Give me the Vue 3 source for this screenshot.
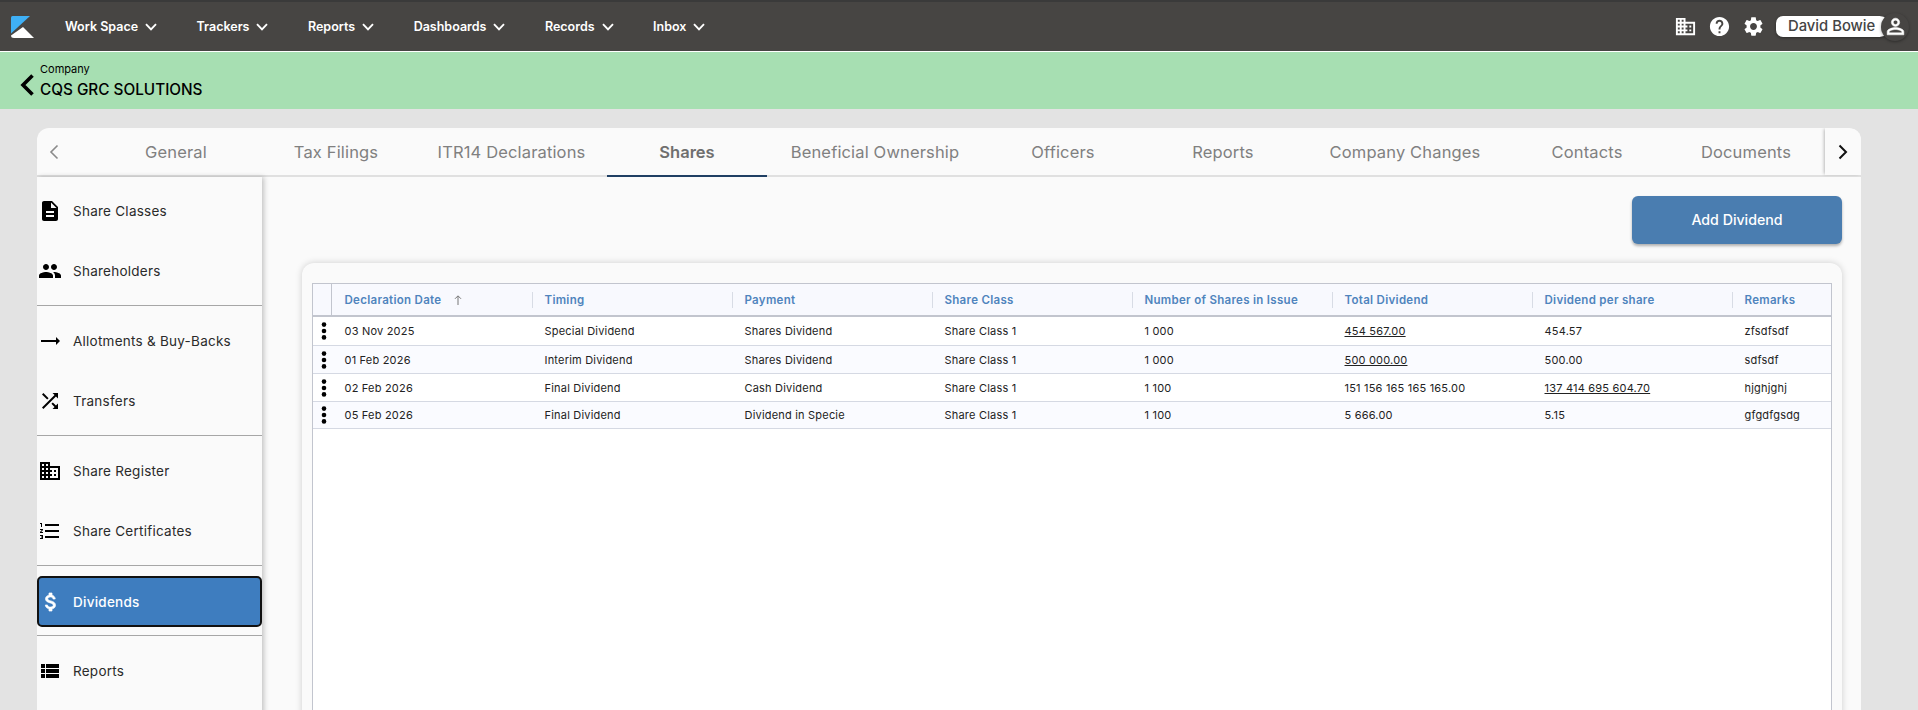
<script setup>
const nav = ['Work Space', 'Trackers', 'Reports', 'Dashboards', 'Records', 'Inbox']
const tabs = ['General', 'Tax Filings', 'ITR14 Declarations', 'Shares', 'Beneficial Ownership', 'Officers', 'Reports', 'Company Changes', 'Contacts', 'Documents']
const icons = {
  doc: 'M14 2H6c-1.1 0-1.99.9-1.99 2L4 20c0 1.1.89 2 1.99 2H18c1.1 0 2-.9 2-2V8l-6-6zm2 16H8v-2h8v2zm0-4H8v-2h8v2zm-3-5V3.5L18.5 9H13z',
  people: 'M16 11c1.66 0 2.99-1.34 2.99-3S17.66 5 16 5c-1.66 0-3 1.34-3 3s1.34 3 3 3zm-8 0c1.66 0 2.99-1.34 2.99-3S9.66 5 8 5C6.34 5 5 6.34 5 8s1.34 3 3 3zm0 2c-2.33 0-7 1.17-7 3.5V19h14v-2.5c0-2.33-4.67-3.5-7-3.5zm8 0c-.29 0-.62.02-.97.05 1.16.84 1.97 1.97 1.97 3.45V19h6v-2.5c0-2.33-4.67-3.5-7-3.5z',
  arrow: 'M22 12l-4-4v3H3v2h15v3z',
  shuffle: 'M10.59 9.17L5.41 4 4 5.41l5.17 5.17 1.42-1.41zM14.5 4l2.04 2.04L4 18.59 5.41 20 17.96 7.46 20 9.5V4h-5.5zm.33 9.41l-1.41 1.41 3.13 3.13L14.5 20H20v-5.5l-2.04 2.04-3.13-3.13z',
  domain: 'M12 7V3H2v18h20V7H12zM6 19H4v-2h2v2zm0-4H4v-2h2v2zm0-4H4V9h2v2zm0-4H4V5h2v2zm4 12H8v-2h2v2zm0-4H8v-2h2v2zm0-4H8V9h2v2zm0-4H8V5h2v2zm10 12h-8v-2h2v-2h-2v-2h2v-2h-2V9h8v10zm-2-8h-2v2h2v-2zm0 4h-2v2h2v-2z',
  list: 'M2 17h2v.5H3v1h1v.5H2v1h3v-4H2v1zm1-9h1V4H2v1h1v3zm-1 3h1.8L2 13.1v.9h3v-1H3.2L5 10.9V10H2v1zm5-6v2h14V5H7zm0 14h14v-2H7v2zm0-6h14v-2H7v2z',
  money: 'M11.8 10.9c-2.27-.59-3-1.2-3-2.15 0-1.09 1.01-1.85 2.7-1.85 1.78 0 2.44.85 2.5 2.1h2.21c-.07-1.72-1.12-3.3-3.21-3.81V3h-3v2.16c-1.94.42-3.5 1.68-3.5 3.61 0 2.31 1.91 3.46 4.7 4.13 2.5.6 3 1.48 3 2.41 0 .69-.49 1.79-2.7 1.79-2.06 0-2.87-.92-2.98-2.1h-2.2c.12 2.19 1.76 3.42 3.68 3.83V21h3v-2.15c1.95-.37 3.5-1.5 3.5-3.55 0-2.84-2.43-3.81-4.7-4.4z',
  viewlist: 'M3 14h4v-4H3v4zm0 5h4v-4H3v4zM3 9h4V5H3v4zm5 5h13v-4H8v4zm0 5h13v-4H8v4zM8 5v4h13V5H8z',
  help: 'M12 2C6.48 2 2 6.48 2 12s4.48 10 10 10 10-4.48 10-10S17.52 2 12 2zm1 17h-2v-2h2v2zm2.07-7.75l-.9.92C13.45 12.9 13 13.5 13 15h-2v-.5c0-1.1.45-2.1 1.17-2.83l1.24-1.26c.37-.36.59-.86.59-1.41 0-1.1-.9-2-2-2s-2 .9-2 2H8c0-2.21 1.79-4 4-4s4 1.79 4 4c0 .88-.36 1.68-.93 2.25z',
  gear: 'M19.14 12.94c.04-.3.06-.61.06-.94 0-.32-.02-.64-.07-.94l2.03-1.58c.18-.14.23-.41.12-.61l-1.92-3.32c-.12-.22-.37-.29-.59-.22l-2.39.96c-.5-.38-1.03-.7-1.62-.94l-.36-2.54c-.04-.24-.24-.41-.48-.41h-3.84c-.24 0-.43.17-.47.41l-.36 2.54c-.59.24-1.13.57-1.62.94l-2.39-.96c-.22-.08-.47 0-.59.22L2.74 8.87c-.12.21-.08.47.12.61l2.03 1.58c-.05.3-.09.63-.09.94s.02.64.07.94l-2.03 1.58c-.18.14-.23.41-.12.61l1.92 3.32c.12.22.37.29.59.22l2.39-.96c.5.38 1.03.7 1.62.94l.36 2.54c.05.24.24.41.48.41h3.84c.24 0 .44-.17.47-.41l.36-2.54c.59-.24 1.13-.56 1.62-.94l2.39.96c.22.08.47 0 .59-.22l1.92-3.32c.12-.22.07-.47-.12-.61l-2.01-1.58zM12 15.6c-1.98 0-3.6-1.62-3.6-3.6s1.62-3.6 3.6-3.6 3.6 1.62 3.6 3.6-1.62 3.6-3.6 3.6z',
  person: 'M12 5.9c1.16 0 2.1.94 2.1 2.1s-.94 2.1-2.1 2.1S9.9 9.16 9.9 8s.94-2.1 2.1-2.1m0 9c2.97 0 6.1 1.46 6.1 2.1v1.1H5.9V17c0-.64 3.13-2.1 6.1-2.1M12 4C9.79 4 8 5.79 8 8s1.79 4 4 4 4-1.79 4-4-1.79-4-4-4zm0 9c-2.67 0-8 1.34-8 4v3h16v-3c0-2.66-5.33-4-8-4z'
}
const side = [
  [{ t: 'Share Classes', i: 'doc' }, { t: 'Shareholders', i: 'people' }],
  [{ t: 'Allotments & Buy-Backs', i: 'arrow' }, { t: 'Transfers', i: 'shuffle' }],
  [{ t: 'Share Register', i: 'domain' }, { t: 'Share Certificates', i: 'list' }],
  [{ t: 'Dividends', i: 'money', active: true }],
  [{ t: 'Reports', i: 'viewlist' }]
]
const cols = ['Declaration Date', 'Timing', 'Payment', 'Share Class', 'Number of Shares in Issue', 'Total Dividend', 'Dividend per share', 'Remarks']
const rows = [
  [{ v: '03 Nov 2025' }, { v: 'Special Dividend' }, { v: 'Shares Dividend' }, { v: 'Share Class 1' }, { v: '1 000' }, { v: '454 567.00', link: true }, { v: '454.57' }, { v: 'zfsdfsdf' }],
  [{ v: '01 Feb 2026' }, { v: 'Interim Dividend' }, { v: 'Shares Dividend' }, { v: 'Share Class 1' }, { v: '1 000' }, { v: '500 000.00', link: true }, { v: '500.00' }, { v: 'sdfsdf' }],
  [{ v: '02 Feb 2026' }, { v: 'Final Dividend' }, { v: 'Cash Dividend' }, { v: 'Share Class 1' }, { v: '1 100' }, { v: '151 156 165 165 165.00' }, { v: '137 414 695 604.70', link: true }, { v: 'hjghjghj' }],
  [{ v: '05 Feb 2026' }, { v: 'Final Dividend' }, { v: 'Dividend in Specie' }, { v: 'Share Class 1' }, { v: '1 100' }, { v: '5 666.00' }, { v: '5.15' }, { v: 'gfgdfgsdg' }]
]
</script>

<template>
  <div class="page">
    <header class="topbar">
      <svg class="logo" viewBox="0 0 24 23" width="24" height="23">
        <path d="M1 2.5Q1 1 2.5 1H20L1 18.5Z" fill="#3fb0f6" />
        <path d="M13 12 24 23H4Q1 23 1 20.5Z" fill="#fff" />
      </svg>
      <nav class="nav">
        <a v-for="n in nav" :key="n" class="nav-item">
          {{ n }}
          <svg viewBox="0 0 12 8" width="12" height="8"><path d="M1 1.2 6 6.4l5-5.2" fill="none" stroke="#fff" stroke-width="1.9" /></svg>
        </a>
      </nav>
      <div class="tools">
        <svg viewBox="0 0 24 24" width="23" height="23"><path :d="icons.domain" fill="#fff" /></svg>
        <svg viewBox="0 0 24 24" width="23" height="23"><path :d="icons.help" fill="#fff" /></svg>
        <svg viewBox="0 0 24 24" width="23" height="23"><path :d="icons.gear" fill="#fff" /></svg>
        <div class="user">
          <span class="user-name">David Bowie</span>
          <span class="avatar"><svg viewBox="0 0 24 24" width="25" height="25"><path :d="icons.person" fill="#fff" stroke="#fff" stroke-width=".5" /></svg></span>
        </div>
      </div>
    </header>

    <section class="crumb">
      <svg class="back" viewBox="0 0 14 22" width="14" height="22"><path d="M12.5 1.5 3 11l9.5 9.5" fill="none" stroke="#000" stroke-width="3.6" /></svg>
      <div class="crumb-text">
        <div class="crumb-small">Company</div>
        <div class="crumb-big">CQS GRC SOLUTIONS</div>
      </div>
    </section>

    <main class="wrap">
      <div class="card">
        <div class="tabbar">
          <div class="tab-prev">
            <svg viewBox="0 0 10 16" width="10" height="16"><path d="M8.5 1.5 2 8l6.5 6.5" fill="none" stroke="#8a8a8a" stroke-width="1.6" /></svg>
          </div>
          <div class="tabs">
            <div v-for="t in tabs" :key="t" class="tab" :class="{ on: t === 'Shares' }">{{ t }}</div>
          </div>
          <div class="tab-next">
            <svg viewBox="0 0 10 16" width="10" height="16"><path d="M1.5 1.5 8 8l-6.5 6.5" fill="none" stroke="#111" stroke-width="2" /></svg>
          </div>
        </div>

        <div class="body">
          <aside class="side">
            <template v-for="(g, gi) in side" :key="gi">
              <hr v-if="gi" class="rule" />
              <div class="group">
                <div v-for="it in g" :key="it.t" class="side-item" :class="{ active: it.active }">
                  <svg viewBox="0 0 24 24" width="24" height="24"><path :d="icons[it.i]" fill="currentColor" /></svg>
                  <span>{{ it.t }}</span>
                </div>
              </div>
            </template>
          </aside>

          <div class="content">
            <div class="actions"><button class="add">Add Dividend</button></div>
            <div class="panel">
              <div class="grid">
                <div class="row head">
                  <div class="cell handle"></div>
                  <div v-for="c in cols" :key="c" class="cell">
                    {{ c }}
                    <svg v-if="c === 'Declaration Date'" class="sort" viewBox="0 0 10 12" width="10" height="12"><path d="M5 11V2M2 4.8 5 1.8l3 3" fill="none" stroke="#777" stroke-width="1" /></svg>
                  </div>
                </div>
                <div v-for="(r, ri) in rows" :key="ri" class="row data">
                  <div class="cell handle">
                    <svg viewBox="0 0 6 18" width="6" height="18"><circle cx="3" cy="2.6" r="2.3" /><circle cx="3" cy="9" r="2.3" /><circle cx="3" cy="15.4" r="2.3" /></svg>
                  </div>
                  <div v-for="(c, ci) in r" :key="ci" class="cell" :class="{ link: c.link }">{{ c.v }}</div>
                </div>
              </div>
            </div>
          </div>
        </div>
      </div>
    </main>
  </div>
</template>

<style>
html, body { margin: 0; overflow: hidden; }
</style>

<style scoped>
.page {
  width: 1918px;
  height: 710px;
  overflow: hidden;
  background: #e3e3e3;
  font-family: Inter, "Noto Sans", sans-serif;
  color: #222;
}
.topbar {
  height: 49px;
  border-top: 2px solid #3a3a3a;
  border-bottom: 1px solid #fff;
  background: #474543;
  display: flex;
  align-items: center;
  padding-left: 11px;
  padding-right: 9px;
}
.logo { flex: none; margin-left: -1px; }
.nav { display: flex; gap: 39.5px; margin-left: 31px; }
.nav-item {
  display: flex;
  align-items: center;
  gap: 7px;
  color: #fff;
  font-size: 12.5px;
  font-weight: 600;
}
.tools { margin-left: auto; display: flex; align-items: center; gap: 11px; }
.user { display: flex; align-items: center; }
.user-name {
  width: 114px;
  height: 21px;
  box-sizing: border-box;
  padding-left: 12px;
  background: #fff;
  border-radius: 8px 12px 12px 8px;
  box-shadow: 0 1px 3px rgba(0, 0, 0, .4);
  color: #444;
  font-size: 14.8px;
  font-weight: 500;
  line-height: 21px;
}
.avatar {
  width: 28px;
  height: 28px;
  margin-left: -9px;
  border-radius: 50%;
  background: #474543;
  box-shadow: 0 1px 3px rgba(0, 0, 0, .35);
  display: flex;
  align-items: center;
  justify-content: center;
  position: relative;
}
.crumb {
  height: 57px;
  background: #a7dfb2;
  display: flex;
  align-items: center;
  padding-left: 20px;
  gap: 6px;
  box-sizing: border-box;
  padding-top: 2px;
}
.back { margin-top: 7px; }
.crumb-small { font-size: 11px; color: #000; line-height: 14px; }
.crumb-big { font-size: 15.3px; font-weight: 500; color: #000; line-height: 22px; margin-top: 3px; }
.wrap { padding: 19px 57px 0 37px; }
.card {
  height: 700px;
  background: #fafafa;
  border-radius: 12px 12px 0 0;
  overflow: hidden;
}
.tabbar {
  height: 47px;
  border-bottom: 2px solid #e0e0e0;
  display: flex;
  box-sizing: content-box;
}
.tab-prev {
  width: 59px;
  flex: none;
  display: flex;
  align-items: center;
  padding-left: 12px;
  box-sizing: border-box;
}
.tabs {
  flex: 1;
  display: grid;
  grid-template-columns: 160px 160px 191px 160px 216px 160px 160px 204px 160px 158px;
}
.tab {
  display: flex;
  align-items: center;
  justify-content: center;
  color: #808080;
  font-size: 16.5px;
  letter-spacing: .15px;
  white-space: nowrap;
  margin-bottom: -2px;
  padding-bottom: 2px;
  box-sizing: border-box;
}
.tab.on {
  color: #6f6f6f;
  font-weight: 600;
  letter-spacing: 0;
  border-bottom: 2px solid #1f3f63;
  padding-bottom: 0;
}
.tab-next {
  width: 36px;
  flex: none;
  display: flex;
  align-items: center;
  justify-content: center;
  box-shadow: -2px 0 3px -1px rgba(0, 0, 0, .25);
  background: #fafafa;
}
.body { display: flex; height: 653px; }
.side {
  width: 225px;
  flex: none;
  padding-top: 4px;
  box-shadow: 2px 0 5px rgba(0, 0, 0, .22);
  box-sizing: border-box;
  position: relative;
}
.rule { margin: 4px 0 5px; border: 0; border-top: 1px solid #a6a6a6; }
.group:has(.active) { padding: 5px 0 4px; }
.side-item {
  height: 60px;
  display: flex;
  align-items: center;
  box-sizing: border-box;
  color: #000;
  padding-left: 1px;
}
.side-item span {
  margin-left: 11px;
  font-size: 13.5px;
  color: #2a2a2a;
  letter-spacing: .25px;
}
.side-item svg { flex: none; }
.side-item.active {
  height: 51px;
  background: #3e7dbf;
  border: 2px solid #111;
  border-radius: 5px;
  color: #fff;
  padding-left: 0;
}
.side-item.active svg { stroke: currentColor; stroke-width: .7; }
.side-item.active span { color: #fff; font-weight: 500; margin-left: 10px; }
.content { flex: 1; padding: 19px 19px 0 40px; min-width: 0; }
.actions { display: flex; justify-content: flex-end; }
.add {
  width: 210px;
  height: 48px;
  border: 0;
  border-radius: 6px;
  background: #4a7db0;
  color: #fff;
  font: 500 14.2px Inter, sans-serif;
  padding: 0 0 2px;
  box-shadow: 0 2px 3px rgba(0, 0, 0, .3);
}
.panel {
  margin-top: 19px;
  height: 560px;
  background: #fafafa;
  border-radius: 12px;
  padding: 20px 10px 0 10px;
  box-shadow: 0 0 7px rgba(0, 0, 0, .18);
  width: 1540px;
  box-sizing: border-box;
}
.grid {
  height: 100%;
  background: #fff;
  border: 1px solid #c2c5ce;
  border-bottom: 0;
  font-size: 11px;
  letter-spacing: .2px;
}
.row {
  display: grid;
  grid-template-columns: 19px repeat(7, 200px) 1fr;
  align-items: center;
  box-sizing: border-box;
}
.cell {
  padding-left: 12.5px;
  white-space: nowrap;
  position: relative;
  box-sizing: border-box;
}
.head {
  background: #f8f9fe;
  border-bottom: 2px solid #c2c5ce;
  height: 33px;
  color: #4f84bd;
  font-weight: 600;
  font-size: 11.5px;
  letter-spacing: .3px;
}
.head .cell + .cell:not(:nth-child(2))::before {
  content: "";
  position: absolute;
  left: 0;
  top: 0;
  height: 16px;
  width: 1px;
  background: #d8dce5;
}
.head .cell { display: flex; align-items: center; height: 16px; }
.head .handle { height: auto; align-self: stretch; border-right: 1px solid #c2c5ce; padding: 0; }
.sort { margin-left: 12px; }
.data { border-bottom: 1px solid #d5d9e3; height: 28px; }
.data:nth-child(2) { height: 29px; }
.data:nth-child(3), .data:nth-child(5) { background: #fafbff; }
.data:nth-child(5) { height: 27px; }
.data .handle { padding: 0 0 0 2px; display: flex; justify-content: center; fill: #000; }
.link { text-decoration: underline; }
</style>
